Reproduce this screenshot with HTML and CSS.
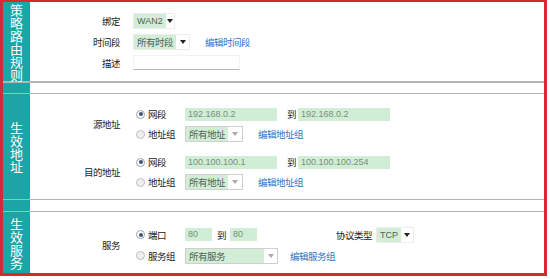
FILE: index.html
```html
<html>
<head>
<meta charset="utf-8">
<title>策略路由规则</title>
<link rel="stylesheet" href="styles.css">
</head>
<body>
<div class="frame">

  <div class="section rule">
    <div class="side"><div class="side-text">策略路由规则</div></div>
    <div class="body rule-body">
      <div class="row">
        <span class="label">绑定</span>
        <span class="ctrl sel sel-wan"><span class="sel-val">WAN2</span><span class="sel-arrow"></span></span>
      </div>
      <div class="row">
        <span class="label">时间段</span>
        <span class="ctrl sel sel-time"><span class="sel-val">所有时段</span><span class="sel-arrow"></span></span>
        <a class="link">编辑时间段</a>
      </div>
      <div class="row">
        <span class="label">描述</span>
        <span class="ctrl desc"></span>
      </div>
    </div>
  </div>

  <div class="section spacer">
    <div class="side"></div>
    <div class="body"></div>
  </div>

  <div class="section addr">
    <div class="side"><div class="side-text">生效地址</div></div>
    <div class="body addr-body">
      <div class="group">
        <span class="label">源地址</span>
        <div class="options">
          <div class="opt-row">
            <span class="radio on"></span><span class="opt">网段</span>
            <span class="field ip">192.168.0.2</span><span class="to">到</span><span class="field ip">192.168.0.2</span>
          </div>
          <div class="opt-row">
            <span class="radio"></span><span class="opt">地址组</span>
            <span class="sel sel-grp"><span class="sel-val">所有地址</span><span class="sel-arrow light"></span></span>
            <a class="link">编辑地址组</a>
          </div>
        </div>
      </div>
      <div class="group">
        <span class="label">目的地址</span>
        <div class="options">
          <div class="opt-row">
            <span class="radio on"></span><span class="opt">网段</span>
            <span class="field ip">100.100.100.1</span><span class="to">到</span><span class="field ip">100.100.100.254</span>
          </div>
          <div class="opt-row">
            <span class="radio"></span><span class="opt">地址组</span>
            <span class="sel sel-grp"><span class="sel-val">所有地址</span><span class="sel-arrow light"></span></span>
            <a class="link">编辑地址组</a>
          </div>
        </div>
      </div>
    </div>
  </div>

  <div class="section spacer spacer-2">
    <div class="side"></div>
    <div class="body"></div>
  </div>

  <div class="section svc">
    <div class="side"><div class="side-text">生效服务</div></div>
    <div class="body svc-body">
      <div class="group">
        <span class="label">服务</span>
        <div class="options">
          <div class="opt-row">
            <span class="radio on"></span><span class="opt">端口</span>
            <span class="field port">80</span><span class="to to-port">到</span><span class="field port">80</span>
            <span class="proto">协议类型</span>
            <span class="sel sel-tcp"><span class="sel-val">TCP</span><span class="sel-arrow"></span></span>
          </div>
          <div class="opt-row">
            <span class="radio"></span><span class="opt">服务组</span>
            <span class="sel sel-svc"><span class="sel-val">所有服务</span><span class="sel-arrow light"></span></span>
            <a class="link link-svc">编辑服务组</a>
          </div>
        </div>
      </div>
    </div>
  </div>

</div>
</body>
</html>
```

FILE: styles.css
```css
* { box-sizing: border-box; }
body { margin:0; background:#fff; color:#222; font-family:"Noto Sans CJK SC", "Liberation Sans", sans-serif; font-size:9.5px; letter-spacing:-0.5px; }

/* outer red frame */
.frame { width:547px; border:solid #d32a33; border-width:2px 3px 3px 3px; }

.section { display:flex; border-bottom:1px solid #b4b4b4; }
.side { width:27px; flex-shrink:0; background:#1ca4a6; color:#fff; display:flex; align-items:center; justify-content:center; }
.side-text { width:14px; font-size:13px; line-height:13px; letter-spacing:0; text-align:center; }
.body { flex:1; }

.rule { height:81px; border-bottom-width:2px; }
.spacer { height:11px; }
.spacer-2 { height:12px; }
.addr { height:106px; }
.svc { height:61px; border-bottom:none; }

.rule-body { padding-top:8px; }
.addr-body { padding-top:10px; display:flex; flex-direction:column; gap:8px; }
.svc-body { padding-top:12px; }

.row { display:flex; align-items:center; height:21px; }
.label { width:90px; text-align:right; flex-shrink:0; }
.ctrl { margin-left:13px; }

.group { display:flex; align-items:center; }
.options { margin-left:16px; }
.opt-row { display:flex; align-items:center; height:20px; }
.svc .opt-row { height:21px; }

/* radios */
.radio { width:9px; height:9px; border-radius:50%; border:1px solid #bcbcbc; background:#f0f0f0; flex-shrink:0; position:relative; }
.radio.on { border-color:#98a3b0; background:#fff; }
.radio.on::after { content:""; position:absolute; left:1.5px; top:1.5px; width:4px; height:4px; border-radius:50%; background:#3d5372; }
.opt { width:37px; margin-left:3px; }

/* inputs and selects */
.field { height:13px; background:#cfeed5; color:#7d8c80; font-family:"Liberation Sans", sans-serif; font-size:9px; letter-spacing:0; line-height:13px; padding-left:3px; }
.field.ip { width:92px; }
.field.port { width:27px; }
.to { margin:0 2px 0 10px; }
.to-port { margin:0 4px 0 5px; }

.sel { display:inline-flex; align-items:center; height:16px; border:1px solid #ececec; background:#fff; }
.sel-val { height:14px; line-height:14px; padding:0 3px; background:#d3eed7; color:#4f5f54; white-space:nowrap; }
.sel-wan .sel-val, .sel-tcp .sel-val { font-family:"Liberation Sans", sans-serif; font-size:9px; letter-spacing:0; }
.sel-arrow { flex:1; display:flex; align-items:center; justify-content:center; }
.sel-arrow::after { content:""; border-style:solid; border-width:4px 3px 0 3px; border-color:#222 transparent transparent transparent; }
.sel-arrow.light::after { border-color:#aaa transparent transparent transparent; }

.sel-wan { width:42px; }
.sel-time { width:57px; }
.sel-grp { width:58px; border-color:#cfcfcf; }
.sel-svc { width:93px; border-color:#cfcfcf; }
.sel-svc .sel-val { width:78px; }
.sel-tcp { width:38px; margin-left:4px; }

.desc { width:107px; height:15px; border:1px solid #f3f3f3; border-bottom:1px solid #b9b9b9; }
.proto { margin-left:79px; }

.link { color:#2b74c4; text-decoration:none; margin-left:15px; }
.link-svc { margin-left:12px; }
```
